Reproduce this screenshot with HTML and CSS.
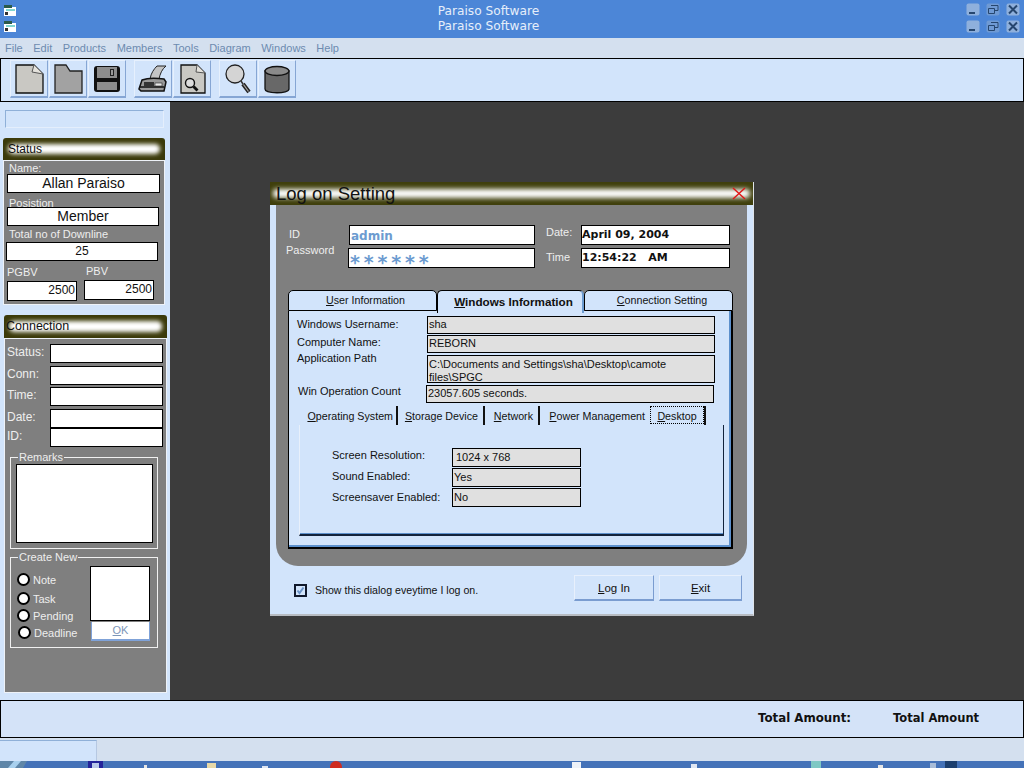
FILE: index.html
```html
<!DOCTYPE html>
<html lang="en">
<head>
    <meta charset="UTF-8">
    <title>Paraiso Software</title>
    <link rel="stylesheet" href="styles.css">
</head>
<body>
    <div class="app">
        <div class="titlebar first">
            <svg class="appicon" width="14" height="14" viewBox="0 0 14 14"><path d="M1 2h8v2h4v9H1z" fill="#fff"/><path d="M1 2h8v3H1z" fill="#2a5a4a"/><path d="M3 6h9v2H3z" fill="#7fd6d0"/><path d="M2 9h3v3H2z" fill="#333"/></svg>
            <div class="titletext">Paraiso Software</div>
            <div class="winbtns">
                <svg width="14" height="13" viewBox="0 0 14 13"><rect x="0.5" y="0.5" width="13" height="12" rx="2" fill="#8fb0dc"/><rect x="3" y="9" width="6" height="2" fill="#26466e"/></svg>
                <svg width="14" height="13" viewBox="0 0 14 13"><rect x="0.5" y="0.5" width="13" height="12" rx="2" fill="#6f9ad4"/><path d="M5 2.500h7v5H9M2.500 5.500h6v5h-6z" fill="none" stroke="#26466e"/></svg>
                <svg width="14" height="13" viewBox="0 0 14 13"><rect x="0.5" y="0.5" width="13" height="12" rx="2" fill="#8fb0dc"/><path d="M3 2.500l8 8M11 2.500l-8 8" stroke="#26466e" stroke-width="2"/></svg>
            </div>
        </div>
        <div class="titlebar second">
            <svg class="appicon" width="14" height="14" viewBox="0 0 14 14"><path d="M1 2h8v2h4v9H1z" fill="#fff"/><path d="M1 2h8v3H1z" fill="#2a5a4a"/><path d="M3 6h9v2H3z" fill="#7fd6d0"/><path d="M2 9h3v3H2z" fill="#333"/></svg>
            <div class="titletext">Paraiso Software</div>
            <div class="winbtns">
                <svg width="14" height="13" viewBox="0 0 14 13"><rect x="0.5" y="0.5" width="13" height="12" rx="2" fill="#8fb0dc"/><rect x="3" y="9" width="6" height="2" fill="#26466e"/></svg>
                <svg width="14" height="13" viewBox="0 0 14 13"><rect x="0.5" y="0.5" width="13" height="12" rx="2" fill="#6f9ad4"/><path d="M5 2.500h7v5H9M2.500 5.500h6v5h-6z" fill="none" stroke="#26466e"/></svg>
                <svg width="14" height="13" viewBox="0 0 14 13"><rect x="0.5" y="0.5" width="13" height="12" rx="2" fill="#8fb0dc"/><path d="M3 2.500l8 8M11 2.500l-8 8" stroke="#26466e" stroke-width="2"/></svg>
            </div>
        </div>

        <ul class="menubar">
            <li>File</li>
            <li>Edit</li>
            <li>Products</li>
            <li>Members</li>
            <li>Tools</li>
            <li>Diagram</li>
            <li>Windows</li>
            <li>Help</li>
        </ul>

        <div class="toolbar">
            <div class="toolgroup">
                <div class="toolbtn">
                    <svg width="32" height="32" viewBox="0 0 32 32"><path d="M3 2h18l9 9v19H3z" fill="#c9c8c3" stroke="#111" stroke-width="1.300"/><path d="M21 2l-2 7 11 2" fill="#e4e2dc" stroke="#555"/></svg>
                </div>
                <div class="toolbtn">
                    <svg width="32" height="32" viewBox="0 0 32 32"><path d="M3 2h11l4 6h12v22H3z" fill="#a2a2a2" stroke="#222" stroke-width="1.300"/></svg>
                </div>
                <div class="toolbtn">
                    <svg width="32" height="32" viewBox="0 0 32 32"><rect x="3" y="3" width="26" height="26" rx="3" fill="#111"/><rect x="6" y="4" width="20" height="11" fill="#8d8d8d"/><rect x="19" y="6" width="4" height="7" fill="#222"/><rect x="20" y="7" width="2" height="5" fill="#9a9a9a"/><rect x="6" y="19" width="20" height="8" fill="#8d8d8d"/></svg>
                </div>
            </div>
            <div class="toolgroup">
                <div class="toolbtn">
                    <svg width="32" height="32" viewBox="0 0 32 32"><path d="M13 16c1-6 4-10 7-13h9c-4 3-6 8-7 13z" fill="#c4c4c4" stroke="#222"/><path d="M2 26l3-9c5-2 15-2 22-1l2 3-2 9H4z" fill="#999" stroke="#111" stroke-width="1.500"/><path d="M3 24h24" stroke="#111" stroke-width="1.500"/><rect x="7" y="19" width="10" height="4" fill="#333"/><rect x="18" y="20" width="7" height="3" fill="#e8e8e8" stroke="#222" stroke-width="0.600"/></svg>
                </div>
                <div class="toolbtn">
                    <svg width="32" height="32" viewBox="0 0 32 32"><path d="M5 2h16l8 8v20H5z" fill="#c9c8c3" stroke="#111" stroke-width="1.300"/><path d="M21 2l-1 7 9 1" fill="#e4e2dc" stroke="#555"/><circle cx="14" cy="20" r="4.500" fill="#ddd" stroke="#111" stroke-width="1.400"/><path d="M17.500 23.500l4 4" stroke="#111" stroke-width="2.800"/></svg>
                </div>
            </div>
            <div class="toolgroup">
                <div class="toolbtn">
                    <svg width="32" height="32" viewBox="0 0 32 32"><circle cx="13" cy="11" r="9" fill="#d4d4d4" stroke="#222" stroke-width="1.300"/><path d="M19 18l2 3" stroke="#333" stroke-width="1.500"/><path d="M21 21l6 8" stroke="#222" stroke-width="4"/><path d="M21.500 21.500l5 7" stroke="#aaa" stroke-width="1.200"/></svg>
                </div>
                <div class="toolbtn">
                    <svg width="32" height="32" viewBox="0 0 32 32"><path d="M4 8v18c0 5 24 5 24 0V8z" fill="#686868" stroke="#111" stroke-width="1.300"/><ellipse cx="16" cy="8" rx="12" ry="4.500" fill="#8a8a8a" stroke="#111" stroke-width="1.300"/></svg>
                </div>
            </div>
        </div>

        <div class="main">
            <div class="sidebar">
                <div class="sidebox"></div>

                <div class="panelhead"><span>Status</span></div>
                <div class="panel status">
                    <div class="slabel">Name:</div>
                    <div class="sfield large">Allan Paraiso</div>
                    <div class="slabel position">Posistion</div>
                    <div class="sfield large narrow">Member</div>
                    <div class="slabel downline">Total no of Downline</div>
                    <div class="sfield narrow shift">25</div>
                    <div class="volumes">
                        <div>
                            <div class="slabel">PGBV</div>
                            <div class="sfield right">2500</div>
                        </div>
                        <div>
                            <div class="slabel">PBV</div>
                            <div class="sfield right">2500</div>
                        </div>
                    </div>
                </div>

                <div class="panelhead conn-head"><span>Connection</span></div>
                <div class="panel connection">
                    <div class="conngrid">
                        <label>Status:</label><div class="cfield"></div>
                        <label>Conn:</label><div class="cfield"></div>
                        <label>Time:</label><div class="cfield"></div>
                        <label>Date:</label><div class="cfield"></div>
                        <label>ID:</label><div class="cfield"></div>
                    </div>
                    <fieldset class="group remarks">
                        <legend>Remarks</legend>
                        <div class="whitebox"></div>
                    </fieldset>
                    <fieldset class="group createnew">
                        <legend>Create New</legend>
                        <div class="createrow">
                            <div class="radios">
                                <div class="radio"><i></i>Note</div>
                                <div class="radio"><i></i>Task</div>
                                <div class="radio"><i></i>Pending</div>
                                <div class="radio"><i></i>Deadline</div>
                            </div>
                            <div class="createside">
                                <div class="notebox"></div>
                                <div class="okbtn"><u>O</u>K</div>
                            </div>
                        </div>
                    </fieldset>
                </div>
            </div>

            <div class="desktop">
                <div class="dialog">
                    <div class="dialoghead">
                        <span>Log on Setting</span>
                        <svg width="14" height="13" viewBox="0 0 14 13"><path d="M1 1l12 11M13 1L1 12" stroke="#e01818" stroke-width="1.500"/></svg>
                    </div>
                    <div class="dialogbody">
                        <div class="login">
                            <div class="loginlabel idlabel">ID</div>
                            <div class="loginfield idval">admin</div>
                            <div class="loginlabel datelabel">Date:</div>
                            <div class="loginfield dateval">April 09, 2004</div>
                            <div class="loginlabel passlabel">Password</div>
                            <div class="loginfield idval stars">******</div>
                            <div class="loginlabel timelabel">Time</div>
                            <div class="loginfield dateval">12:54:22&nbsp;&nbsp; AM</div>
                        </div>

                        <div class="tabs">
                            <div class="tab tab1"><u>U</u>ser Information</div>
                            <div class="tab tab2 active"><u>W</u>indows Information</div>
                            <div class="tab tab3"><u>C</u>onnection Setting</div>
                        </div>
                        <div class="tabpage">
                            <div class="inforow">
                                <span>Windows Username:</span>
                                <div class="gfield">sha</div>
                            </div>
                            <div class="inforow">
                                <span>Computer Name:</span>
                                <div class="gfield">REBORN</div>
                            </div>
                            <div class="inforow tall">
                                <span>Application Path</span>
                                <div class="gfield">C:\Documents and Settings\sha\Desktop\camote files\SPGC</div>
                            </div>
                            <div class="inforow count">
                                <span>Win Operation Count</span>
                                <div class="gfield">23057.605 seconds.</div>
                            </div>

                            <div class="subtabs">
                                <div class="subtab st1"><u>O</u>perating System</div>
                                <div class="subtab st2"><u>S</u>torage Device</div>
                                <div class="subtab st3"><u>N</u>etwork</div>
                                <div class="subtab st4"><u>P</u>ower Management</div>
                                <div class="subtab st5"><span class="focus"><u>D</u>esktop</span></div>
                            </div>
                            <div class="subpage">
                                <div class="subrow">
                                    <span>Screen Resolution:</span>
                                    <div class="gfield pad">1024 x 768</div>
                                </div>
                                <div class="subrow">
                                    <span>Sound Enabled:</span>
                                    <div class="gfield">Yes</div>
                                </div>
                                <div class="subrow">
                                    <span>Screensaver Enabled:</span>
                                    <div class="gfield">No</div>
                                </div>
                            </div>
                        </div>
                    </div>
                    <div class="dialogfoot">
                        <svg class="check" width="13" height="13" viewBox="0 0 13 13"><rect x="1" y="1" width="11" height="11" fill="#d2e4fb" stroke="#10182a" stroke-width="2"/><path d="M3.500 6.500l2 2.500 4-5.500" fill="none" stroke="#6c94c8" stroke-width="2"/></svg>
                        <span class="checklabel">Show this dialog eveytime I log on.</span>
                        <div class="footbtn login-btn"><u>L</u>og In</div>
                        <div class="footbtn exit-btn"><u>E</u>xit</div>
                    </div>
                </div>
            </div>
        </div>

        <div class="totals">
            <span class="totallabel">Total Amount:</span>
            <span class="totalval">Total Amount</span>
        </div>
        <div class="statusbar"><div class="statuspanel"></div></div>
        <svg class="taskbar" width="1024" height="7" viewBox="0 0 1024 7">
            <path d="M0 7V0h27l-4 7z" fill="#5f86a8"/>
            <path d="M8 7l6-7h7l-6 7z" fill="#a8d0ee"/>
            <rect x="88" y="0" width="15" height="7" fill="#23239a"/>
            <rect x="92" y="2" width="7" height="5" fill="#b8c8ea"/>
            <rect x="144" y="4" width="3" height="3" fill="#e6e6e6"/>
            <rect x="207" y="2" width="9" height="5" fill="#e8d9a8"/>
            <rect x="262" y="5" width="6" height="2" fill="#dfe6f2"/>
            <circle cx="336" cy="6" r="6" fill="#cf2b20"/>
            <rect x="572" y="1" width="9" height="6" fill="#eef2f8"/>
            <rect x="691" y="3" width="6" height="4" fill="#dfe6f2"/>
            <rect x="811" y="0" width="10" height="7" fill="#7fc8c4"/>
            <rect x="878" y="4" width="5" height="3" fill="#e6e6e6"/>
            <rect x="930" y="2" width="6" height="5" fill="#a8bcd8"/>
            <rect x="945" y="0" width="12" height="7" fill="#1c3f6e"/>
        </svg>
    </div>
</body>
</html>
```

FILE: styles.css
```css
*{
    box-sizing: border-box;
    padding: 0;
    margin: 0;
}
ul li{
    list-style: none;
}
body{
    width: 1024px;
    height: 768px;
    overflow: hidden;
    font-family: "Liberation Sans", Arial, sans-serif;
    font-size: 11px;
    color: #111;
    background-color: #d2e4fb;
}
.app{
    display: flex;
    flex-direction: column;
    height: 768px;
}

/* title bars */
.titlebar{
    display: flex;
    align-items: center;
    height: 19px;
    padding: 0 4px 0 3px;
    background-color: #4c86d7;
}
.titlebar.second{
    padding-bottom: 5px;
}
.appicon{
    flex: none;
}
.titletext{
    flex: 1;
    padding-right: 6px;
    text-align: center;
    font-family: "DejaVu Sans", sans-serif;
    font-size: 12.2px;
    color: #e6eefa;
}
.first .titletext{
    padding-top: 3px;
}
.winbtns{
    display: flex;
    gap: 6px;
}

.menubar{
    display: flex;
    align-items: center;
    gap: 10.5px;
    height: 20px;
    padding-left: 5px;
    background-color: #d4e0ef;
    color: #6d8bb0;
}

/* toolbar */
.toolbar{
    display: flex;
    gap: 8px;
    height: 44px;
    padding: 1px 0 0 9px;
    border: 1px solid #000;
    background-color: #d2e4fb;
}
.toolgroup{
    display: flex;
    gap: 1px;
}
.toolbtn{
    display: flex;
    align-items: center;
    justify-content: center;
    width: 38px;
    height: 38px;
    border-top: 1px solid #e6f0fd;
    border-left: 1px solid #e6f0fd;
    border-right: 1px solid #86a6d4;
    border-bottom: 2px solid #86a6d4;
}

.main{
    display: flex;
    height: 598px;
}

/* left side */
.sidebar{
    flex: none;
    width: 170px;
    padding: 8px 0 0 3px;
    background-color: #d2e4fb;
}
.sidebox{
    width: 159px;
    height: 18px;
    margin-left: 2px;
    border-top: 1px solid #8fb0d8;
    border-left: 1px solid #8fb0d8;
    border-right: 1px solid #e4eefc;
    border-bottom: 1px solid #e4eefc;
}
.panelhead{
    position: relative;
    width: 162px;
    height: 22px;
    margin-top: 10px;
    padding: 3px 0 0 5px;
    border-radius: 3px 3px 0 0;
    background-color: #3b3a0a;
    font-size: 12px;
    overflow: hidden;
}
.panelhead::before{
    content: "";
    position: absolute;
    top: 6px;
    bottom: 6px;
    left: 5px;
    right: 5px;
    border-radius: 5px;
    background-color: #fff;
    filter: blur(2px);
}
.panelhead span{
    position: relative;
    line-height: 16px;
}
.conn-head{
    width: 163px;
    height: 23px;
    margin-left: 1px;
    padding-left: 2px;
    font-size: 12.5px;
}
.panel{
    width: 162px;
    border: 1px solid #eef2f8;
    background-color: #7f7f7f;
    color: #eee;
}
.status{
    height: 145px;
    padding: 1px 3px 0 3px;
}
.slabel{
    height: 12px;
    padding-left: 2px;
    line-height: 12px;
}
.sfield{
    width: 153px;
    height: 19px;
    line-height: 17px;
    border: 1px solid #000;
    background-color: #fff;
    color: #111;
    font-size: 12px;
    text-align: center;
}
.status .position{
    height: 10px;
    margin-top: 4px;
}
.status .large{
    font-size: 14px;
}
.status .narrow{
    width: 152px;
}
.status .downline{
    margin-top: 2px;
    margin-bottom: 2px;
}
.status .shift{
    margin-left: -1px;
}
.volumes{
    display: flex;
    gap: 7px;
    margin-top: 6px;
}
.volumes .slabel{
    height: 14px;
    padding-left: 0;
    line-height: 10px;
}
.volumes > div + div{
    margin-top: -1px;
}
.volumes > div + div .slabel{
    padding-left: 2px;
}
.volumes .right{
    width: 70px;
    height: 20px;
    padding-right: 1px;
    text-align: right;
}
.connection{
    width: 163px;
    height: 355px;
    margin-left: 1px;
    padding: 5px 0 0 2px;
}
.conngrid{
    display: grid;
    grid-template-columns: 43px 113px;
    grid-template-rows: 20px 19px 20px 17px 19px;
    row-gap: 2px;
    font-size: 12px;
}
.conngrid label{
    line-height: 16px;
}
.cfield{
    height: 19px;
    border: 1px solid #000;
    background-color: #fff;
}
.group{
    width: 148px;
    min-width: 0;
    margin: 4px 0 0 3px;
    padding: 1px 4px 5px 5px;
    border: 1px solid #f0f0f0;
}
.group legend{
    margin-left: 2px;
    padding: 0 1px;
    line-height: 12px;
}
.whitebox{
    width: 137px;
    height: 79px;
    border: 1px solid #000;
    background-color: #fff;
}
.createnew{
    height: 97px;
    margin-top: 2px;
    padding: 0 7px 0 6px;
}
.createnew legend{
    margin-left: 1px;
}
.createrow{
    display: flex;
    justify-content: space-between;
}
.radios{
    padding-top: 6px;
}
.radio{
    display: flex;
    align-items: center;
    gap: 3px;
    height: 17px;
    white-space: nowrap;
}
.radio:first-child{
    height: 21px;
}
.radio:last-child{
    margin-left: 1px;
}
.radio i{
    display: block;
    width: 13px;
    height: 13px;
    border: 2px solid #000;
    border-radius: 50%;
    background-color: #fff;
}
.createside{
    margin-top: 3px;
    width: 60px;
}
.notebox{
    width: 60px;
    height: 55px;
    border: 1px solid #000;
    background-color: #fff;
}
.okbtn{
    width: 59px;
    height: 19px;
    margin: 1px 0 0 1px;
    line-height: 17px;
    text-align: center;
    color: #7d96b8;
    background-color: #fff;
    border-left: 1px solid #7fa2d8;
    border-right: 1px solid #7fa2d8;
    border-bottom: 2px solid #7fa2d8;
}

/* desktop and the dialog on it */
.desktop{
    flex: 1;
    position: relative;
    background-color: #3c3c3c;
}
.dialog{
    position: absolute;
    left: 100px;
    top: 80px;
    width: 484px;
    height: 434px;
    border-right: 1px solid #dfe4ea;
    border-bottom: 2px solid #b8bcc2;
    background-color: #d2e4fb;
}
.dialoghead{
    position: relative;
    display: flex;
    align-items: center;
    justify-content: space-between;
    height: 23px;
    padding: 0 7px 0 6px;
    background-color: #3f3f0c;
    font-size: 18.5px;
    overflow: hidden;
}
.dialoghead::before{
    content: "";
    position: absolute;
    top: 7px;
    bottom: 7px;
    left: 3px;
    right: 3px;
    border-radius: 4px;
    background-color: #fff;
    filter: blur(2.5px);
}
.dialoghead span,
.dialoghead svg{
    position: relative;
}
.dialogbody{
    height: 361px;
    margin: 0 6px;
    padding: 20px 0 0 12px;
    border-radius: 0 0 22px 22px;
    background-color: #7f7f7f;
}
.login{
    display: grid;
    grid-template-columns: 60px 189px 46px 149px;
    grid-template-rows: 20px 20px;
    row-gap: 3px;
    margin-left: -2px;
    color: #eee;
    font-size: 11px;
}
.loginlabel{
    line-height: 14px;
}
.idlabel{
    padding: 2px 0 0 3px;
}
.passlabel{
    margin-top: -5px;
}
.datelabel{
    margin-left: 11px;
}
.timelabel{
    margin: 2px 0 0 11px;
}
.loginfield{
    border: 1px solid #000;
    background-color: #fff;
    color: #111;
    font-family: "DejaVu Sans", sans-serif;
    font-weight: bold;
    font-size: 11px;
    line-height: 17px;
    white-space: nowrap;
}
.idval{
    margin-left: 3px;
    padding: 2px 0 0 1px;
    color: #6c9bd0;
    font-size: 12px;
}
.stars{
    margin-left: 2px;
    padding-top: 9px;
    font-size: 19px;
    letter-spacing: 3.800px;
    line-height: 9px;
}

/* big tabs */
.tabs{
    display: flex;
    height: 21px;
    margin-top: 22px;
}
.tab{
    height: 21px;
    padding-top: 2px;
    text-align: center;
    font-size: 10.7px;
    line-height: 14px;
    border: 1px solid #000;
    border-radius: 5px 5px 0 0;
    background-color: #d2e4fb;
}
.tab1{
    width: 149px;
    padding-left: 6px;
}
.tab2{
    width: 147px;
}
.tab3{
    width: 149px;
    padding-left: 7px;
}
.tab.active{
    position: relative;
    height: 23px;
    padding: 4px 0 0 7px;
    border-left: 1px solid #000;
    border-right: 2px solid #6c9bd0;
    border-bottom: none;
    font-size: 11.7px;
    font-weight: bold;
}
.tabpage{
    width: 445px;
    height: 238px;
    padding: 5px 0 0 8px;
    border-left: 1px solid #000;
    border-right: 2px solid #000;
    border-bottom: 2px solid #000;
    background-color: #d2e4fb;
    box-shadow: inset -2px -2px 0 #5c90cc;
}
.inforow{
    display: grid;
    grid-template-columns: 130px 288px;
    height: 18px;
    margin-bottom: 1px;
}
.inforow span{
    line-height: 17px;
}
.inforow .gfield{
    height: 18px;
}
.inforow:nth-child(2){
    margin-bottom: 2px;
}
.inforow:nth-child(2) span{
    line-height: 15px;
}
.inforow.tall{
    height: 29px;
    margin-bottom: 1px;
}
.inforow.tall span{
    margin-top: -4px;
    line-height: 14px;
}
.inforow.tall .gfield{
    height: 28px;
    padding-top: 2px;
    line-height: 13px;
}
.inforow.count{
    grid-template-columns: 129px 288px;
}
.inforow.count span{
    padding-left: 1px;
    line-height: 12px;
}
.gfield{
    padding-left: 1px;
    border: 1px solid #000;
    background-color: #e0e0e0;
    line-height: 15px;
}

/* small tabs */
.subtabs{
    display: flex;
    height: 19px;
    margin: 3px 0 0 5px;
}
.subtab{
    height: 19px;
    line-height: 20px;
    font-size: 10.7px;
    text-align: right;
    white-space: nowrap;
    border-right: 2px solid #111;
    padding-right: 3px;
}
.st1{
    width: 96px;
}
.st2{
    width: 87px;
    padding-right: 5px;
}
.st3{
    width: 55px;
    padding-right: 5px;
}
.st4{
    width: 110px;
    padding-right: 5px;
    border-right: none;
}
.st5{
    width: 56px;
    padding-right: 0;
}
.focus{
    display: block;
    width: 54px;
    height: 18px;
    text-align: center;
    border: 1px dotted #000;
    line-height: 18px;
}
.subpage{
    width: 425px;
    height: 111px;
    margin-left: 2px;
    padding: 23px 0 0 32px;
    border-left: 1px solid #e8f0fb;
    border-right: 1px solid #12233c;
    border-bottom: 2px solid #12233c;
    box-shadow: inset 0 -1px 0 #5c90cc;
}
.subrow{
    display: grid;
    grid-template-columns: 120px 129px;
    height: 18px;
    margin-bottom: 2px;
}
.subrow span{
    line-height: 14px;
}
.subrow .gfield{
    line-height: 17px;
}
.subrow:nth-child(2) span{
    margin-top: 1px;
}
.subrow:nth-child(3) span{
    margin-top: 2px;
}
.subrow .pad{
    padding-left: 3px;
}

/* dialog bottom row */
.dialogfoot{
    display: flex;
    align-items: center;
    height: 48px;
    padding: 0 11px 4px 24px;
}
.check{
    flex: none;
    margin: 4px 8px 0 0;
}
.checklabel{
    flex: 1;
    margin-top: 3px;
    font-size: 10.6px;
}
.footbtn{
    height: 26px;
    line-height: 24px;
    text-align: center;
    font-size: 11.500px;
    border-top: 1px solid #e8f0fc;
    border-left: 1px solid #e8f0fc;
    border-right: 1px solid #7a9cd0;
    border-bottom: 2px solid #7a9cd0;
}
.login-btn{
    width: 80px;
}
.exit-btn{
    width: 83px;
    margin-left: 5px;
}

/* bottom bars */
.totals{
    display: flex;
    align-items: center;
    height: 38px;
    padding-bottom: 2px;
    border: 1px solid #000;
    background-color: #d4e3f8;
    font-family: "DejaVu Sans", sans-serif;
    font-weight: bold;
    font-size: 11.8px;
}
.totallabel{
    margin-left: 757px;
}
.totalval{
    margin: -1px 0 0 42px;
    font-size: 11.500px;
}
.statusbar{
    height: 23px;
    padding-top: 2px;
    background-color: #d4e0ef;
}
.statuspanel{
    width: 97px;
    height: 21px;
    border-top: 1px solid #8fb0d8;
    border-right: 1px solid #b6c8e2;
    background-color: #d2e4fb;
}
.taskbar{
    display: block;
    flex: none;
    background-color: #4472b8;
}
```
